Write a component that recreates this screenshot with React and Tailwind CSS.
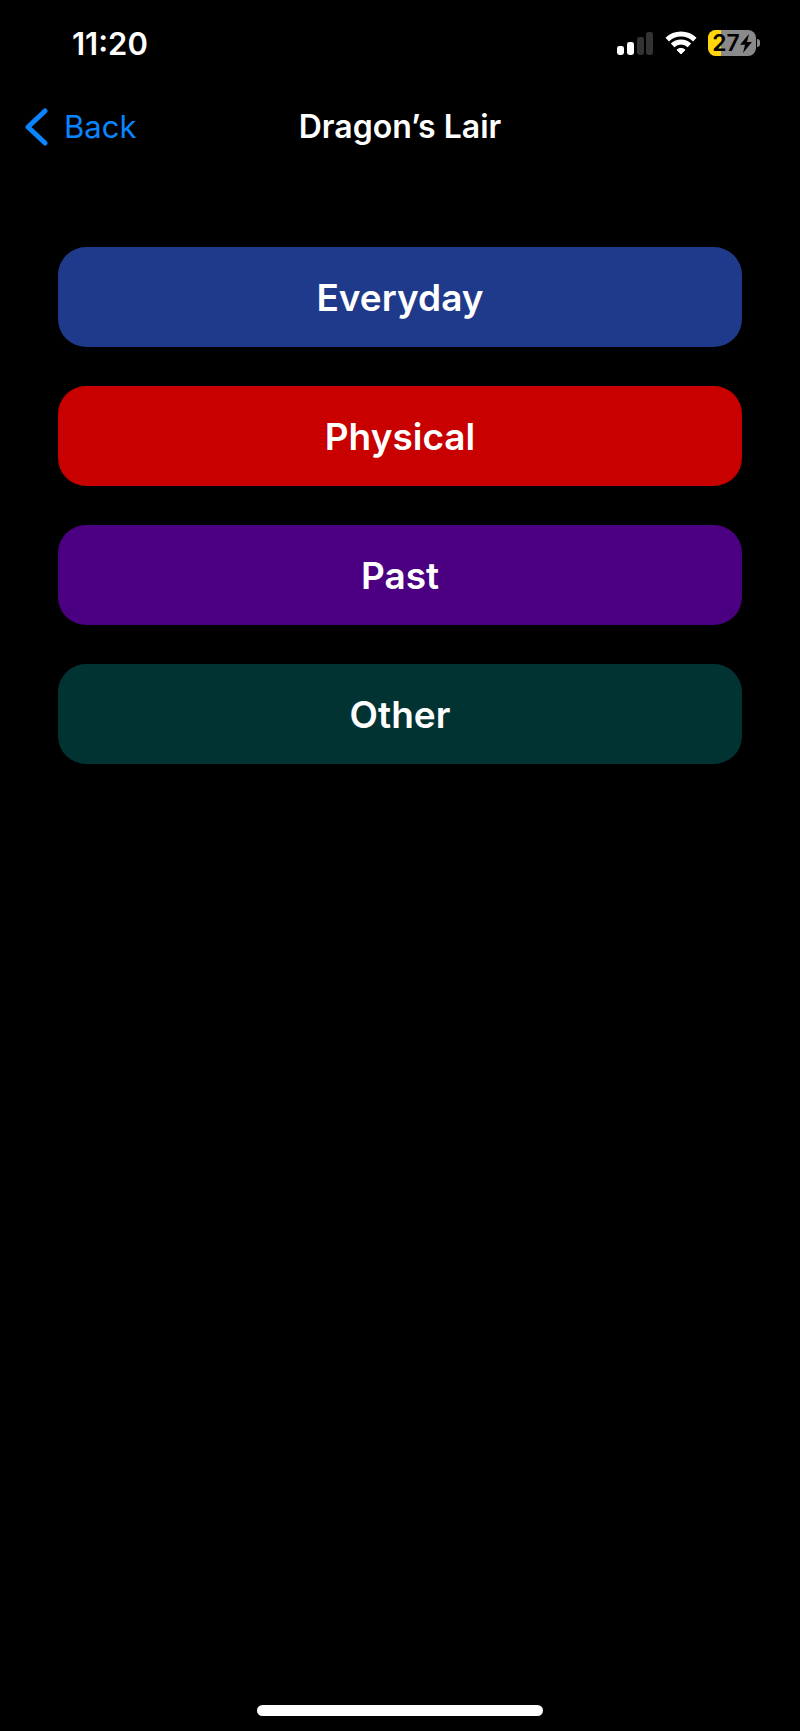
const categories = [
  { name: 'Everyday', color: 'bg-[#1f3a8a]' },
  { name: 'Physical', color: 'bg-[#c80000]' },
  { name: 'Past', color: 'bg-[#4b0082]' },
  { name: 'Other', color: 'bg-[#013333]' },
];

function SignalIcon() {
  return (
    <svg width="37" height="24" viewBox="0 0 37 24" aria-hidden="true">
      <rect x="0" y="15" width="7" height="9" rx="2.4" fill="#fff" />
      <rect x="10" y="11" width="7" height="13" rx="2.4" fill="#fff" />
      <rect x="20" y="6" width="7" height="18" rx="2.4" fill="#333" />
      <rect x="29" y="1" width="7" height="23" rx="2.4" fill="#333" />
    </svg>
  );
}

function WifiIcon() {
  return (
    <svg width="32" height="24" viewBox="0 0 32 24" aria-hidden="true">
      <g fill="none" stroke="#fff" strokeWidth="5">
        <path d="M2.2 8.6a19.8 19.8 0 0 1 27.6 0" />
        <path d="M7.6 14.4a12 12 0 0 1 16.8 0" />
      </g>
      <path
        d="M12 18.9a6 6 0 0 1 8 0L16 23z"
        fill="#fff"
        stroke="#fff"
        strokeWidth="1"
        strokeLinejoin="round"
      />
    </svg>
  );
}

function Battery() {
  return (
    <div className="flex items-center gap-px">
      <div className="relative flex h-[26px] w-12 items-center justify-center overflow-hidden rounded-lg bg-[#8a8a8a] text-black">
        <div className="absolute inset-y-0 left-0 w-[13px] bg-[#ffd60a]" />
        <span className="relative text-[23px] leading-none font-semibold">27</span>
        <svg className="relative" width="12" height="19" viewBox="0 0 12 19" aria-hidden="true">
          <path d="M9 0 0 10.8h5L3 19l9-11H7z" fill="#000" />
        </svg>
      </div>
      <div className="h-2 w-[3px] rounded-r-full bg-[#8a8a8a]" />
    </div>
  );
}

function StatusBar() {
  return (
    <div className="flex h-[86px] items-center justify-between pr-10 pl-[72px]">
      <span className="text-[31px] leading-none font-semibold">11:20</span>
      <div className="flex items-center gap-[11px]">
        <SignalIcon />
        <WifiIcon />
        <Battery />
      </div>
    </div>
  );
}

function NavBar() {
  return (
    <header className="grid h-[82px] grid-cols-[1fr_auto_1fr] items-center px-6">
      <button type="button" className="flex items-center gap-4 justify-self-start text-[#0a84ff]">
        <svg width="24" height="38" viewBox="0 0 24 38" aria-hidden="true">
          <path
            d="M21 3 4 19l17 16"
            fill="none"
            stroke="currentColor"
            strokeWidth="5"
            strokeLinecap="round"
            strokeLinejoin="round"
          />
        </svg>
        <span className="text-[31px] leading-10">Back</span>
      </button>
      <h1 className="text-[32px] leading-10 font-semibold">Dragon’s Lair</h1>
    </header>
  );
}

function App() {
  return (
    <div className="flex min-h-screen flex-col bg-black font-['Inter',sans-serif] text-white">
      <StatusBar />
      <NavBar />

      <main className="flex flex-1 flex-col gap-[39px] px-[58px] pt-[79px]">
        {categories.map((category) => (
          <button
            key={category.name}
            type="button"
            className={`h-[100px] w-full rounded-[28px] text-[37px] leading-none font-semibold ${category.color}`}
          >
            {category.name}
          </button>
        ))}
      </main>

      {/* Home indicator */}
      <div className="flex justify-center pt-4 pb-[15px]">
        <div className="h-[11px] w-[286px] rounded-full bg-white" />
      </div>
    </div>
  );
}

export default App;
